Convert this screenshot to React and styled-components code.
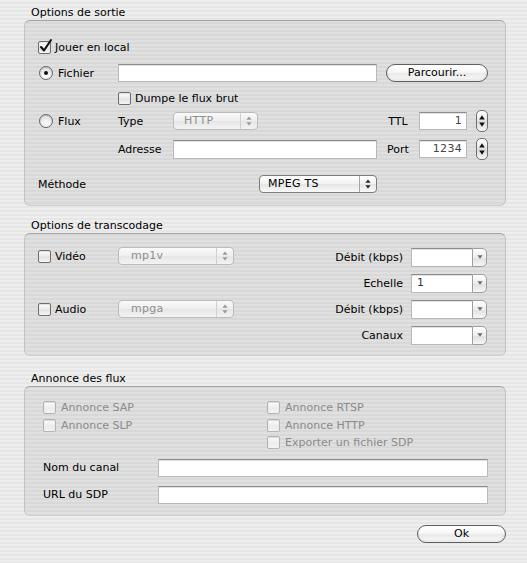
import React from "react";
import styled, { createGlobalStyle, css } from "styled-components";

const Global = createGlobalStyle`
  html, body {
    margin: 0;
    padding: 0;
  }
  body {
    width: 527px;
    height: 563px;
    overflow: hidden;
    font-family: "DejaVu Sans", "Liberation Sans", sans-serif;
    font-size: 11px;
    color: #000;
    background: repeating-linear-gradient(
      to bottom,
      #eeeeee 0px,
      #eeeeee 2px,
      #e6e6e6 2px,
      #e6e6e6 4px
    );
  }
`;

const Window = styled.div`
  box-sizing: border-box;
  width: 527px;
  height: 563px;
  padding: 6px 21px 0 24px;
`;

const GroupTitle = styled.div`
  height: 14px;
  line-height: 14px;
  padding-left: 7px;
  margin-top: ${(p) => p.$top || 0}px;
`;

const GroupBox = styled.div`
  box-sizing: border-box;
  height: ${(p) => p.$h}px;
  border: 1px solid #c2c2c2;
  border-top-color: #a3a3a3;
  border-bottom-color: #cdcdcd;
  border-radius: 6px;
  background: rgba(0, 0, 0, 0.06);
`;

/* a grid slot: column / row given per use */
const Cell = styled.div`
  grid-column: ${(p) => p.$c};
  grid-row: ${(p) => p.$r};
  display: flex;
  align-items: center;
  justify-content: ${(p) => p.$justify || "flex-start"};
  min-width: 0;
`;

/* ---------- controls ---------- */

const CheckRow = styled.label`
  display: flex;
  align-items: center;
  gap: ${(p) => (p.$gap != null ? p.$gap : 4)}px;
  color: ${(p) => (p.$disabled ? "#8b8b8b" : "#000")};
  white-space: nowrap;
`;

const Box = styled.span`
  position: relative;
  box-sizing: border-box;
  flex: none;
  width: 13px;
  height: 13px;
  border: 1px solid ${(p) => (p.$disabled ? "#b3b3b3" : "#6e6e6e")};
  border-radius: 2px;
  background: ${(p) =>
    p.$disabled
      ? "linear-gradient(#fbfbfb, #ececec 60%, #f4f4f4)"
      : "linear-gradient(#ffffff, #e4e4e4 60%, #f6f6f6)"};
  box-shadow: inset 0 1px 1px rgba(0, 0, 0, 0.12);
`;

const Tick = styled.svg`
  position: absolute;
  left: 0px;
  top: -3px;
  width: 14px;
  height: 14px;
  overflow: visible;
`;

function Check({ label, checked, disabled, gap }) {
  return (
    <CheckRow $disabled={disabled} $gap={gap}>
      <Box $disabled={disabled}>
        {checked && (
          <Tick viewBox="0 0 14 14">
            <path
              d="M2 8 L5 11.5 L12 1"
              fill="none"
              stroke="#111"
              strokeWidth="2.1"
              strokeLinecap="round"
              strokeLinejoin="round"
            />
          </Tick>
        )}
      </Box>
      {label}
    </CheckRow>
  );
}

const RadioCircle = styled.span`
  position: relative;
  box-sizing: border-box;
  flex: none;
  width: 14px;
  height: 14px;
  border: 1px solid #666;
  border-radius: 50%;
  background: radial-gradient(circle at 50% 75%, #ffffff 0%, #e8e8e8 55%, #d6d6d6 100%);
  box-shadow: inset 0 1px 1px rgba(0, 0, 0, 0.15);

  ${(p) =>
    p.$on &&
    css`
      &::after {
        content: "";
        position: absolute;
        left: 4px;
        top: 4px;
        width: 4px;
        height: 4px;
        border-radius: 50%;
        background: #111;
      }
    `}
`;

const RadioRow = styled.label`
  display: flex;
  align-items: center;
  gap: 5px;
  padding-left: 1px;
`;

function Radio({ label, on }) {
  return (
    <RadioRow>
      <RadioCircle $on={on} />
      {label}
    </RadioRow>
  );
}

const TextField = styled.div`
  box-sizing: border-box;
  flex: none;
  height: ${(p) => p.$h || 18}px;
  width: ${(p) => (p.$w ? p.$w + "px" : "100%")};
  background: #fff;
  border: 1px solid #b9b9b9;
  border-top-color: #8c8c8c;
  box-shadow: inset 0 1px 0 #e2e2e2;
  padding: 0 4px;
  line-height: 16px;
  text-align: ${(p) => p.$align || "left"};
  color: #444;
  letter-spacing: 0.3px;
`;

const PushButton = styled.div`
  box-sizing: border-box;
  height: 18px;
  width: ${(p) => p.$w}px;
  border: 1px solid #5f5f5f;
  border-radius: 9px;
  background: linear-gradient(#ffffff 0%, #f7f7f7 45%, #e9e9e9 55%, #f4f4f4 80%, #ffffff 100%);
  box-shadow: inset 0 -2px 2px rgba(0, 0, 0, 0.08);
  text-align: center;
  line-height: 16px;
`;

const PopUpShell = styled.div`
  box-sizing: border-box;
  display: flex;
  align-items: stretch;
  flex: none;
  height: 18px;
  width: ${(p) => p.$w}px;
  border: 1px solid ${(p) => (p.$disabled ? "#bcbcbc" : "#7d7d7d")};
  border-radius: 4px;
  background: ${(p) =>
    p.$disabled
      ? "linear-gradient(#fafafa, #eeeeee 50%, #e6e6e6 51%, #f3f3f3)"
      : "linear-gradient(#ffffff, #f1f1f1 50%, #e4e4e4 51%, #fafafa)"};
  color: ${(p) => (p.$disabled ? "#8e8e8e" : "#000")};
`;

const PopUpText = styled.span`
  flex: 1;
  padding-left: ${(p) => p.$pad || 8}px;
  line-height: 16px;
  letter-spacing: 0.3px;
`;

const PopUpArrows = styled.span`
  width: 16px;
  display: flex;
  align-items: center;
  justify-content: center;
  border-left: 1px solid ${(p) => (p.$disabled ? "#d0d0d0" : "#a6a6a6")};
`;

function UpDown({ color }) {
  return (
    <svg width="6" height="10" viewBox="0 0 6 10">
      <polygon points="3,0.5 5.6,3.8 0.4,3.8" fill={color} />
      <polygon points="0.4,6.2 5.6,6.2 3,9.5" fill={color} />
    </svg>
  );
}

function PopUp({ value, w, disabled, pad }) {
  return (
    <PopUpShell $w={w} $disabled={disabled}>
      <PopUpText $pad={pad}>{value}</PopUpText>
      <PopUpArrows $disabled={disabled}>
        <UpDown color={disabled ? "#9a9a9a" : "#222"} />
      </PopUpArrows>
    </PopUpShell>
  );
}

const StepperShell = styled.div`
  box-sizing: border-box;
  width: 12px;
  height: 22px;
  border: 1px solid #707070;
  border-radius: 5px;
  background: linear-gradient(#ffffff, #e8e8e8 45%, #dadada 55%, #f7f7f7);
  display: flex;
  flex-direction: column;
  align-items: center;
  justify-content: space-between;
  padding: 4px 0 4px;
`;

function Stepper() {
  return (
    <StepperShell>
      <svg width="6" height="5" viewBox="0 0 6 5">
        <polygon points="3,0.3 5.8,4.5 0.2,4.5" fill="#111" />
      </svg>
      <svg width="6" height="5" viewBox="0 0 6 5">
        <polygon points="0.2,0.5 5.8,0.5 3,4.7" fill="#111" />
      </svg>
    </StepperShell>
  );
}

const ComboShell = styled.div`
  display: flex;
  height: 19px;
  width: 76px;
`;

const ComboField = styled(TextField)`
  flex: 1;
  height: 19px;
  border-right: none;
  color: #333;
  padding-left: 5px;
`;

const ComboButton = styled.span`
  box-sizing: border-box;
  width: 15px;
  display: flex;
  align-items: center;
  justify-content: center;
  border: 1px solid #9e9e9e;
  border-radius: 0 5px 5px 0;
  background: linear-gradient(#ffffff, #ededed 50%, #e0e0e0 51%, #f6f6f6);
`;

function Combo({ value }) {
  return (
    <ComboShell>
      <ComboField>{value}</ComboField>
      <ComboButton>
        <svg width="6" height="4" viewBox="0 0 6 4">
          <polygon points="0.4,0.3 5.6,0.3 3,3.8" fill="#6a6a6a" />
        </svg>
      </ComboButton>
    </ComboShell>
  );
}

const Label = styled.span`
  text-align: ${(p) => p.$align || "left"};
  white-space: nowrap;
`;

/* ---------- Options de sortie ---------- */

const OutputGrid = styled.div`
  display: grid;
  box-sizing: border-box;
  height: 100%;
  padding: 18px 0 0 13px;
  grid-template-columns: 80px 55px 204px 42px 48px 21px;
  grid-template-rows: 17px 34px 16px 30px 26px 44px;
`;

/* ---------- Options de transcodage ---------- */

const TranscodeLayout = styled.div`
  display: flex;
  justify-content: space-between;
  height: 100%;
`;

const TranscodeLeft = styled.div`
  display: grid;
  padding: 12px 0 0 13px;
  grid-template-columns: 80px 116px;
  grid-template-rows: 20px 20px;
  row-gap: 33px;
  align-items: center;
  align-content: start;
`;

const TranscodeRight = styled.div`
  display: grid;
  padding: 13px 18px 0 0;
  grid-template-columns: auto 76px;
  grid-auto-rows: 20px;
  column-gap: 8px;
  row-gap: 6px;
  align-items: center;
  justify-items: end;
  align-content: start;
`;

/* ---------- Annonce des flux ---------- */

const AnnounceBody = styled.div`
  padding: 12px 18px 0 18px;
`;

const AnnounceChecks = styled.div`
  display: grid;
  grid-template-columns: 224px auto;
  grid-auto-rows: 17.5px;
  align-items: center;
`;

const AnnounceFields = styled.div`
  display: grid;
  margin-top: 7px;
  grid-template-columns: 115px 330px;
  grid-auto-rows: 18px;
  row-gap: 9px;
  align-items: center;
`;

const Footer = styled.div`
  display: flex;
  justify-content: flex-end;
  margin-top: 9px;
`;

export default function App() {
  return (
    <>
      <Global />
      <Window>
        <GroupTitle>Options de sortie</GroupTitle>
        <GroupBox $h={186}>
          <OutputGrid>
            <Cell $c="1 / 4" $r="1">
              <Check label="Jouer en local" checked />
            </Cell>

            <Cell $c="1" $r="2">
              <Radio label="Fichier" on />
            </Cell>
            <Cell $c="2 / 4" $r="2">
              <TextField />
            </Cell>
            <Cell $c="4 / 7" $r="2" $justify="flex-end">
              <PushButton $w={102}>Parcourir...</PushButton>
            </Cell>

            <Cell $c="2 / 5" $r="3">
              <Check label="Dumpe le flux brut" />
            </Cell>

            <Cell $c="1" $r="4">
              <Radio label="Flux" />
            </Cell>
            <Cell $c="2" $r="4">
              <Label>Type</Label>
            </Cell>
            <Cell $c="3" $r="4">
              <PopUp value="HTTP" w={85} disabled pad={10} />
            </Cell>
            <Cell $c="4" $r="4" $justify="center">
              <Label>TTL</Label>
            </Cell>
            <Cell $c="5" $r="4">
              <TextField $align="right">1</TextField>
            </Cell>
            <Cell $c="6" $r="4" $justify="flex-end">
              <Stepper />
            </Cell>

            <Cell $c="2" $r="5">
              <Label>Adresse</Label>
            </Cell>
            <Cell $c="3" $r="5">
              <TextField $h={19} />
            </Cell>
            <Cell $c="4" $r="5" $justify="center">
              <Label>Port</Label>
            </Cell>
            <Cell $c="5" $r="5">
              <TextField $align="right">1234</TextField>
            </Cell>
            <Cell $c="6" $r="5" $justify="flex-end">
              <Stepper />
            </Cell>

            <Cell $c="1 / 3" $r="6">
              <Label>Méthode</Label>
            </Cell>
            <Cell $c="3" $r="6" $justify="flex-end">
              <PopUp value="MPEG TS" w={118} />
            </Cell>
          </OutputGrid>
        </GroupBox>

        <GroupTitle $top={13}>Options de transcodage</GroupTitle>
        <GroupBox $h={123}>
          <TranscodeLayout>
            <TranscodeLeft>
              <Check label="Vidéo" />
              <PopUp value="mp1v" w={116} disabled pad={12} />
              <Check label="Audio" />
              <PopUp value="mpga" w={116} disabled pad={12} />
            </TranscodeLeft>
            <TranscodeRight>
              <Label>Débit (kbps)</Label>
              <Combo />
              <Label>Echelle</Label>
              <Combo value="1" />
              <Label>Débit (kbps)</Label>
              <Combo />
              <Label>Canaux</Label>
              <Combo />
            </TranscodeRight>
          </TranscodeLayout>
        </GroupBox>

        <GroupTitle $top={16}>Annonce des flux</GroupTitle>
        <GroupBox $h={130}>
          <AnnounceBody>
            <AnnounceChecks>
              <Check label="Annonce SAP" disabled gap={5} />
              <Check label="Annonce RTSP" disabled gap={5} />
              <Check label="Annonce SLP" disabled gap={5} />
              <Check label="Annonce HTTP" disabled gap={5} />
              <span />
              <Check label="Exporter un fichier SDP" disabled gap={5} />
            </AnnounceChecks>
            <AnnounceFields>
              <Label>Nom du canal</Label>
              <TextField />
              <Label>URL du SDP</Label>
              <TextField />
            </AnnounceFields>
          </AnnounceBody>
        </GroupBox>

        <Footer>
          <PushButton $w={89}>Ok</PushButton>
        </Footer>
      </Window>
    </>
  );
}
